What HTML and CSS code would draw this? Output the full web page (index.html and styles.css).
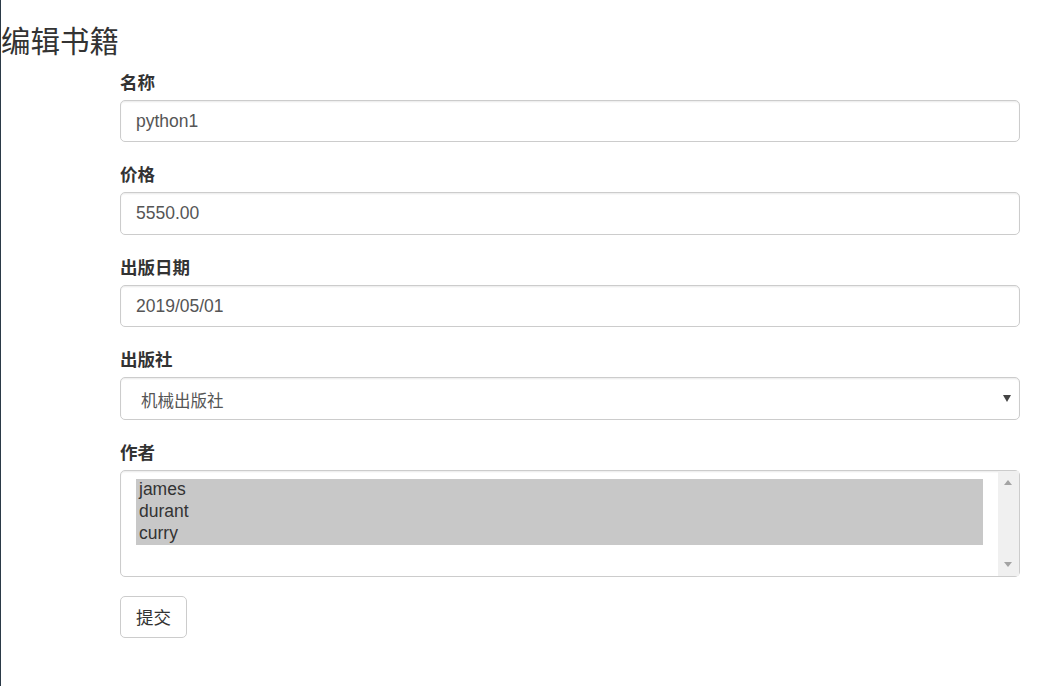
FILE: index.html
```html
<!DOCTYPE html>
<html lang="zh-CN">
<head>
    <meta charset="UTF-8">
    <meta name="viewport" content="width=device-width, initial-scale=1.0">
    <title>编辑书籍</title>
    <link rel="stylesheet" href="styles.css">
</head>
<body>
    <h3 class="page-title">编辑书籍</h3>

    <form class="book-form">
        <div class="form-group">
            <label for="title">名称</label>
            <input type="text" id="title" class="form-control" value="python1">
        </div>
        <div class="form-group">
            <label for="price">价格</label>
            <input type="text" id="price" class="form-control" value="5550.00">
        </div>
        <div class="form-group">
            <label for="pub-date">出版日期</label>
            <input type="text" id="pub-date" class="form-control" value="2019/05/01">
        </div>
        <div class="form-group">
            <label for="publish">出版社</label>
            <div class="select-wrap">
                <select id="publish" class="form-control">
                    <option selected>机械出版社</option>
                    <option>人民出版社</option>
                </select>
            </div>
        </div>
        <div class="form-group">
            <label for="authors">作者</label>
            <div class="list-wrap">
                <select id="authors" class="form-control author-list" multiple size="4">
                    <option selected>james</option>
                    <option selected>durant</option>
                    <option selected>curry</option>
                </select>
                <span class="fake-scroll">
                    <span class="arrow-up"></span>
                    <span class="arrow-down"></span>
                </span>
            </div>
        </div>
        <button type="button" class="btn">提交</button>
    </form>
</body>
</html>
```

FILE: styles.css
```css
body {
    margin: 0;
    border-left: 1px solid #2b3a47;
    min-height: 686px;
    box-sizing: border-box;
    font-family: "Liberation Sans", Arial, "Noto Sans CJK SC", sans-serif;
    font-size: 17.5px;
    color: #333;
    background: #fff;
}
.page-title {
    margin: 23px 0 12.5px 0;
    font-family: "Noto Sans CJK SC", sans-serif;
    font-size: 29.5px;
    font-weight: 400;
    line-height: 33px;
    color: #333;
}
.book-form {
    margin-left: 119px;
    width: 900px;
}
.form-group {
    margin-bottom: 18.75px;
}
.form-group label {
    display: block;
    margin-bottom: 6.25px;
    font-family: "Noto Sans CJK SC", sans-serif;
    font-weight: 700;
    font-size: 17.5px;
    line-height: 25px;
}
.form-control {
    display: block;
    width: 100%;
    height: 42.5px;
    box-sizing: border-box;
    padding: 7.5px 15px;
    font-family: "Liberation Sans", Arial, "Noto Sans CJK SC", sans-serif;
    font-size: 17.5px;
    line-height: 25px;
    color: #555;
    background: #fff;
    border: 1.25px solid #ccc;
    border-radius: 5px;
    box-shadow: inset 0 1.25px 1.25px rgba(0,0,0,0.075);
    outline: none;
}
.select-wrap {
    position: relative;
}
.select-wrap select {
    appearance: none;
    -webkit-appearance: none;
    padding: 9px 15px 6px 20px;
    font-family: "Noto Sans CJK SC", sans-serif;
    font-size: 16.5px;
}
.select-wrap::after {
    content: "";
    position: absolute;
    right: 9px;
    top: 18px;
    border-left: 4px solid transparent;
    border-right: 4px solid transparent;
    border-top: 7px solid #444;
}
.list-wrap {
    position: relative;
}
.author-list {
    height: auto;
    padding: 8.5px 36px 8.5px 15px;
    overflow: hidden;
    color: #333;
}
.author-list option {
    padding: 0 3px;
    line-height: 22px;
    height: 22px;
    color: #333;
}
.author-list option:checked {
    background: #c8c8c8 linear-gradient(#c8c8c8, #c8c8c8);
    color: #333;
}
.fake-scroll {
    position: absolute;
    top: 1.25px;
    bottom: 1.25px;
    right: 1.25px;
    width: 21px;
    background: #f0f0f0;
}
.arrow-up, .arrow-down {
    position: absolute;
    left: 6px;
    border-left: 4.5px solid transparent;
    border-right: 4.5px solid transparent;
}
.arrow-up {
    top: 9px;
    border-bottom: 5px solid #a3a3a3;
}
.arrow-down {
    bottom: 9px;
    border-top: 5px solid #a3a3a3;
}
.btn {
    height: 42.5px;
    padding: 7.5px 15px;
    font-family: "Noto Sans CJK SC", sans-serif;
    font-size: 17.5px;
    line-height: 25px;
    color: #333;
    background: #fff;
    border: 1.25px solid #ccc;
    border-radius: 5px;
    cursor: pointer;
}
```
